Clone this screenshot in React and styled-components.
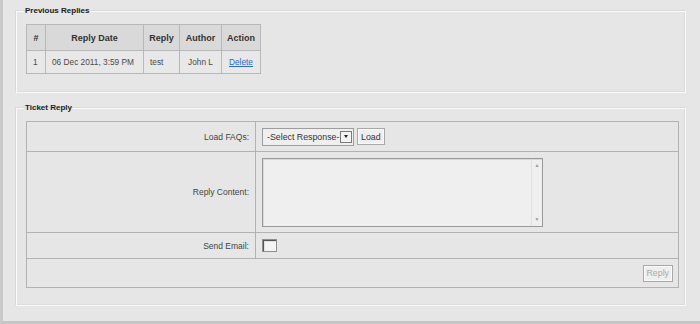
import styled, { createGlobalStyle } from "styled-components";

const GlobalStyle = createGlobalStyle`
  html, body { margin: 0; padding: 0; background: #e6e6e6; }
  body { font-family: "Liberation Sans", Arial, sans-serif; }
`;

const Page = styled.div`
  box-sizing: border-box;
  width: 700px;
  height: 324px;
  background: #e6e6e6;
  border-left: 3px solid #c9c9c9;
  border-bottom: 3px solid #c6c6c6;
  padding: 6px 14px 0 13px;
  display: flex;
  flex-direction: column;
  gap: 10px;
`;

const Box = styled.fieldset`
  margin: 0;
  padding: 8px 6px ${p => p.$bottom || 17}px 9px;
  border: 1px solid #fafafa;
  box-shadow: -1px -1px 0 #d9d9d9, inset -1px -1px 0 #dcdcdc;
  min-width: 0;
`;

const Legend = styled.legend`
  padding: 0 1px;
  margin-left: -2px;
  font-size: 8px;
  font-weight: bold;
  color: #222;
  line-height: 10px;
`;

const Grid = styled.table`
  border-collapse: collapse;
  border: 1px solid #b2b2b2;
  font-size: 8.3px;
  color: #4a4a4a;
  width: ${p => p.$full ? "100%" : "auto"};
`;

const Head = styled.th`
  background: #d9d9d9;
  border: 1px solid #b8b8b8;
  height: 25px;
  padding: 0;
  font-size: 9px;
  color: #333;
  width: ${p => p.$w}px;
`;

const Cell = styled.td`
  background: #e8e8e8;
  border: 1px solid #b8b8b8;
  height: 22px;
  padding: 0 0 0 ${p => p.$pad || 0}px;
  text-align: ${p => p.$align || "left"};
`;

const DeleteLink = styled.a`
  color: #2a6cbf;
  text-decoration: underline;
  cursor: pointer;
`;

const Label = styled.td`
  width: 222px;
  border: 1px solid #b2b2b2;
  text-align: right;
  padding: 0 6px 0 0;
  font-size: 8.5px;
  color: #444;
  height: ${p => p.$h}px;
`;

const Field = styled.td`
  border: 1px solid #b2b2b2;
  padding: 0 ${p => p.$right || 0}px 0 6px;
  height: ${p => p.$h}px;
  text-align: ${p => p.$align || "left"};
`;

const Row = styled.div`
  display: flex;
  align-items: center;
  gap: 3px;
`;

const SelectBox = styled.div`
  box-sizing: border-box;
  width: 92px;
  height: 18px;
  display: flex;
  align-items: center;
  justify-content: space-between;
  padding: 0 1px 0 4px;
  background: #efefef;
  border: 1px solid #9d9d9d;
  font-size: 8.8px;
  color: #333;
`;

const Arrow = styled.div`
  box-sizing: border-box;
  width: 12px;
  height: 12px;
  background: #f2f2f2;
  border: 1px solid #7a7a7a;
  display: flex;
  align-items: center;
  justify-content: center;
  &::after {
    content: "";
    border-left: 2.5px solid transparent;
    border-right: 2.5px solid transparent;
    border-top: 3px solid #222;
  }
`;

const Button = styled.button`
  box-sizing: border-box;
  height: ${p => p.$h || 17}px;
  padding: 0 3px;
  background: #efefef;
  border: 1px solid #a8a8a8;
  box-shadow: inset 0 0 0 1px #fafafa;
  font-family: "Liberation Sans", Arial, sans-serif;
  font-size: 8.8px;
  color: ${p => p.disabled ? "#a9a9a9" : "#333"};
`;

const TextBox = styled.div`
  box-sizing: border-box;
  width: 281px;
  height: 69px;
  display: flex;
  background: #efefef;
  border: 1px solid #9a9a9a;
  box-shadow: inset 1px 1px 0 #d8d8d8;
`;

const Text = styled.textarea`
  flex: 1;
  border: 0;
  margin: 0;
  padding: 2px;
  resize: none;
  background: transparent;
  outline: none;
`;

const ScrollTrack = styled.div`
  width: 10px;
  border-left: 1px solid #e2e2e2;
  display: flex;
  flex-direction: column;
  justify-content: space-between;
  align-items: center;
  padding: 4px 0;
  font-size: 5px;
  color: #9a9a9a;
  line-height: 5px;
`;

const Check = styled.div`
  box-sizing: border-box;
  width: 15px;
  height: 13px;
  background: #f4f4f4;
  border: 1px solid #8e8e8e;
  box-shadow: inset 1px 1px 0 #555, inset 2px 2px 0 #e0e0e0;
`;

export default function App() {
  return (
    <>
      <GlobalStyle />
      <Page>
        <Box $bottom={18}>
          <Legend>Previous Replies</Legend>
          <Grid>
            <thead>
              <tr>
                <Head $w={18}>#</Head>
                <Head $w={97}>Reply Date</Head>
                <Head $w={35}>Reply</Head>
                <Head $w={41}>Author</Head>
                <Head $w={38}>Action</Head>
              </tr>
            </thead>
            <tbody>
              <tr>
                <Cell $pad={6}>1</Cell>
                <Cell $pad={6}>06 Dec 2011, 3:59 PM</Cell>
                <Cell $pad={6}>test</Cell>
                <Cell $align="center">John L</Cell>
                <Cell $align="center"><DeleteLink>Delete</DeleteLink></Cell>
              </tr>
            </tbody>
          </Grid>
        </Box>
        <Box $bottom={17}>
          <Legend>Ticket Reply</Legend>
          <Grid $full>
            <tbody>
              <tr>
                <Label $h={29}>Load FAQs:</Label>
                <Field $h={29}>
                  <Row>
                    <SelectBox>-Select Response-<Arrow /></SelectBox>
                    <Button>Load</Button>
                  </Row>
                </Field>
              </tr>
              <tr>
                <Label $h={80}>Reply Content:</Label>
                <Field $h={80}>
                  <TextBox>
                    <Text />
                    <ScrollTrack><span>▲</span><span>▼</span></ScrollTrack>
                  </TextBox>
                </Field>
              </tr>
              <tr>
                <Label $h={25}>Send Email:</Label>
                <Field $h={25}><Check /></Field>
              </tr>
              <tr>
                <Field colSpan={2} $h={28} $align="right" $right={5}>
                  <Button $h={17} disabled>Reply</Button>
                </Field>
              </tr>
            </tbody>
          </Grid>
        </Box>
      </Page>
    </>
  );
}
